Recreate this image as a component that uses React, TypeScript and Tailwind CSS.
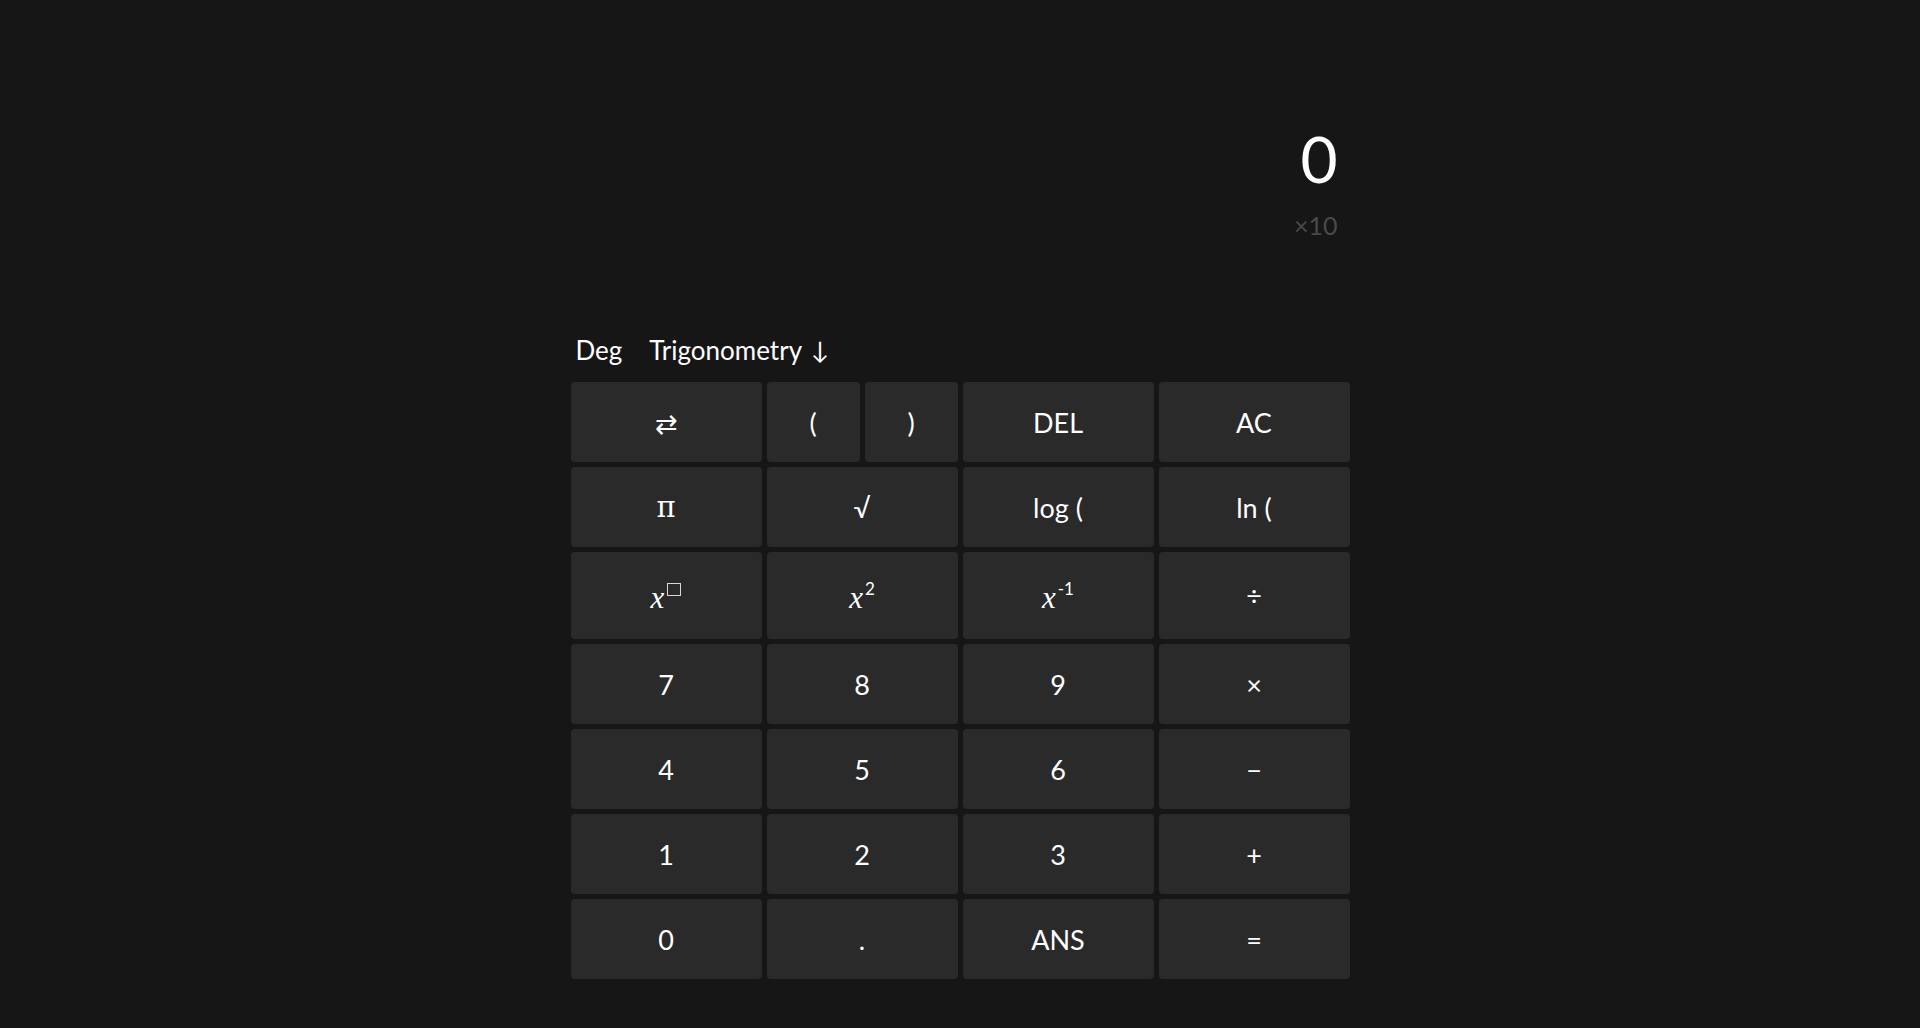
import React from "react";

const sans = "font-['Lato','Noto_Sans',sans-serif]";
const serif = "font-['Liberation_Serif','DejaVu_Serif',serif]";

function Key({ children, className = "" }: { children: React.ReactNode; className?: string }) {
  return (
    <button
      className={`flex items-center justify-center rounded-[4px] bg-[#2a2a2a] text-white text-[27px] leading-none ${className}`}
    >
      {children}
    </button>
  );
}

function Pow({ sup, box }: { sup?: string; box?: boolean }) {
  return (
    <span className="inline-flex items-baseline mt-[4px]">
      <span className={`${serif} italic text-[31px] leading-none`}>x</span>
      {box ? (
        <span className="relative top-[-12px] ml-[3px] inline-block w-[14px] h-[13px] border border-[#d8d8d8]" />
      ) : (
        <span className="relative top-[-13px] ml-[2px] text-[17px] leading-none">{sup}</span>
      )}
    </span>
  );
}

export default function App() {
  const small = "text-[22px]";
  return (
    <main className={`min-h-screen bg-[#161616] text-white ${sans}`}>
      <div className="w-[779px] mx-auto">
        <div className="flex flex-col items-end pr-[12px] pt-[127px]">
          <div className="text-[64px] leading-[64px]">0</div>
          <div className="mt-[22px] text-[25px] leading-[25px] text-[#4a4a4a]">×10</div>
        </div>

        <div className="mt-[98px] flex items-center pl-[5px] text-[26px] leading-[28px]">
          <span>Deg</span>
          <span className="ml-[27px]">Trigonometry</span>
          <span className="ml-[9px] text-[24px]">↓</span>
        </div>

        <div className="mt-[18px] grid grid-cols-[191px_191px_191px_191px] grid-rows-[80px_80px_87px_80px_80px_80px_80px] gap-[5px]">
          <Key>⇄</Key>
          <div className="flex gap-[5px]">
            <Key className="flex-1">(</Key>
            <Key className="flex-1">)</Key>
          </div>
          <Key>DEL</Key>
          <Key>AC</Key>

          <Key className="font-['DejaVu_Serif',serif] text-[29px]">π</Key>
          <Key>√</Key>
          <Key>log (</Key>
          <Key>ln (</Key>

          <Key><Pow box /></Key>
          <Key><Pow sup="2" /></Key>
          <Key><Pow sup="-1" /></Key>
          <Key className={small}>÷</Key>

          <Key>7</Key>
          <Key>8</Key>
          <Key>9</Key>
          <Key className={small}>×</Key>

          <Key>4</Key>
          <Key>5</Key>
          <Key>6</Key>
          <Key className={small}>−</Key>

          <Key>1</Key>
          <Key>2</Key>
          <Key>3</Key>
          <Key className={small}>+</Key>

          <Key>0</Key>
          <Key>.</Key>
          <Key>ANS</Key>
          <Key className={small}>=</Key>
        </div>
      </div>
    </main>
  );
}
